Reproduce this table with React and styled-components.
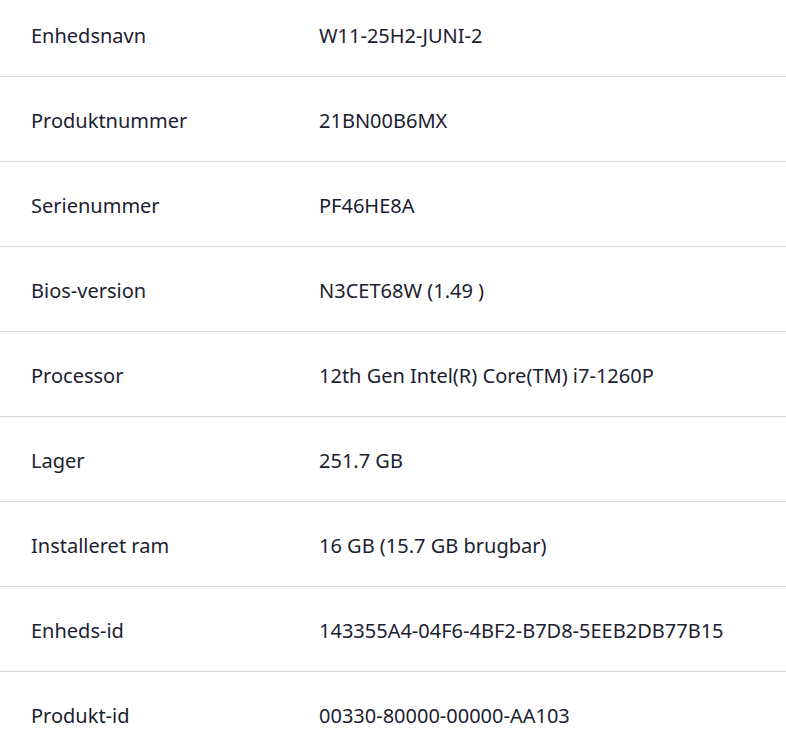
import styled, { createGlobalStyle } from 'styled-components';

const GlobalStyle = createGlobalStyle`
  body {
    margin: 0;
    background: #ffffff;
    font-family: 'Segoe UI', 'Noto Sans', 'Open Sans', sans-serif;
    color: #1c2130;
  }
`;

const SList = styled.dl`
  margin: -8px 0 0;
  padding: 0;
`;

const SRow = styled.div`
  display: grid;
  grid-template-columns: 288px 1fr;
  align-items: center;
  box-sizing: border-box;
  height: 85px;
  padding: 4px 0 0 31px;
  border-bottom: 1px solid ${({ $last }) => ($last ? 'transparent' : '#cfd8dd')};
`;

const SLabel = styled.dt`
  font-size: 20px;
  line-height: 1;
`;

const SValue = styled.dd`
  margin: 0;
  font-size: 20px;
  line-height: 1;
`;

const specs = [
  ['Enhedsnavn', 'W11-25H2-JUNI-2'],
  ['Produktnummer', '21BN00B6MX'],
  ['Serienummer', 'PF46HE8A'],
  ['Bios-version', 'N3CET68W (1.49 )'],
  ['Processor', '12th Gen Intel(R) Core(TM) i7-1260P'],
  ['Lager', '251.7 GB'],
  ['Installeret ram', '16 GB (15.7 GB brugbar)'],
  ['Enheds-id', '143355A4-04F6-4BF2-B7D8-5EEB2DB77B15'],
  ['Produkt-id', '00330-80000-00000-AA103'],
];

const App = () => {
  return (
    <>
      <GlobalStyle />
      <SList>
        {specs.map(([label, value], i) => (
          <SRow key={label} $last={i === specs.length - 1}>
            <SLabel>{label}</SLabel>
            <SValue>{value}</SValue>
          </SRow>
        ))}
      </SList>
    </>
  );
};

export default App;
